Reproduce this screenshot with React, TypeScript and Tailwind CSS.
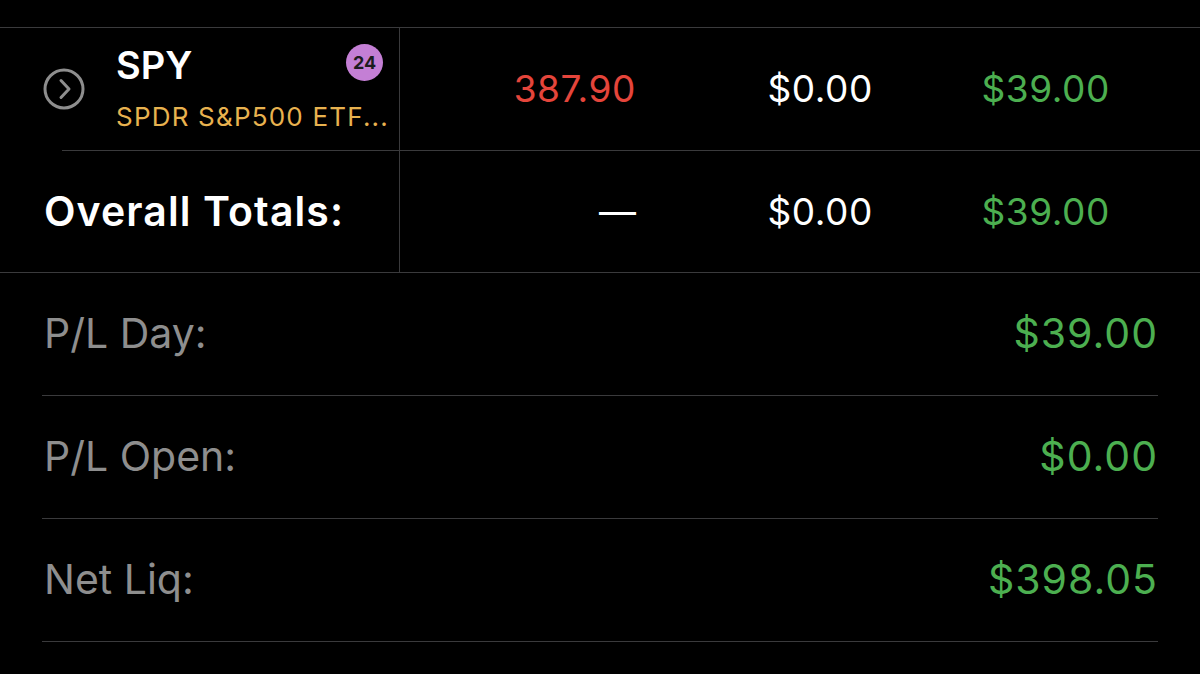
import React from "react";

const font = { fontFamily: "Inter, 'Liberation Sans', sans-serif" };

function ChevronCircle() {
    return (
        <svg width="42" height="42" viewBox="0 0 42 42" fill="none" className="shrink-0">
            <circle cx="21" cy="21" r="19" stroke="#8e8e8e" strokeWidth="3" />
            <path d="M18 12.5 L26 21 L18 29.5" stroke="#8e8e8e" strokeWidth="3" strokeLinecap="round" strokeLinejoin="round" />
        </svg>
    );
}

function SummaryRow({ label, value }: { label: string; value: string }) {
    return (
        <div className="mx-[42px] h-[123px] flex items-center justify-between border-b border-[#3a3a3c]">
            <span className="pl-[2px] text-[41px] text-[#8e8e8e]">{label}</span>
            <span className="text-[41px] tracking-[1px] text-[#4caf50]">{value}</span>
        </div>
    );
}

export default function App() {
    return (
        <div className="w-[1200px] h-[674px] bg-black overflow-hidden antialiased" style={font}>
            <div className="h-[27px]" />

            {/* positions table */}
            <div className="border-y border-[#3a3a3c]">
                {/* SPY row */}
                <div className="flex h-[122px]">
                    <div className="w-[400px] shrink-0 border-r border-[#3a3a3c] flex items-center pl-[43px] pr-[16px]">
                        <ChevronCircle />
                        <div className="ml-[31px] flex-1 min-w-0 flex flex-col">
                            <div className="flex items-center justify-between -mt-[3px]">
                                <span className="text-[38px] font-semibold text-white leading-none">SPY</span>
                                <span className="w-[37px] h-[37px] -mt-[4px] rounded-full bg-[#c47fd5] flex items-center justify-center text-[18px] font-bold text-[#1c1c1e]">
                                    24
                                </span>
                            </div>
                            <span className="mt-[20px] text-[26px] text-[#e8b24f] leading-none tracking-[1.2px] whitespace-nowrap">
                                SPDR S&amp;P500 ETF...
                            </span>
                        </div>
                    </div>
                    <div className="w-[236px] flex items-center justify-end text-[37px] tracking-[0.6px] text-[#e5453b]">387.90</div>
                    <div className="w-[237px] flex items-center justify-end text-[37px] tracking-[0.6px] text-white">$0.00</div>
                    <div className="w-[237px] flex items-center justify-end text-[37px] tracking-[0.6px] text-[#4caf50]">$39.00</div>
                </div>

                <div className="ml-[62px] h-px bg-[#3a3a3c]" />

                {/* totals row */}
                <div className="flex h-[121px]">
                    <div className="w-[400px] shrink-0 border-r border-[#3a3a3c] flex items-center pl-[44px]">
                        <span className="text-[41px] font-semibold tracking-[1.1px] text-white">Overall Totals:</span>
                    </div>
                    <div className="w-[236px] flex items-center justify-end text-[37px] text-white">—</div>
                    <div className="w-[237px] flex items-center justify-end text-[37px] tracking-[0.6px] text-white">$0.00</div>
                    <div className="w-[237px] flex items-center justify-end text-[37px] tracking-[0.6px] text-[#4caf50]">$39.00</div>
                </div>
            </div>

            {/* account summary */}
            <SummaryRow label="P/L Day:" value="$39.00" />
            <SummaryRow label="P/L Open:" value="$0.00" />
            <SummaryRow label="Net Liq:" value="$398.05" />
        </div>
    );
}
